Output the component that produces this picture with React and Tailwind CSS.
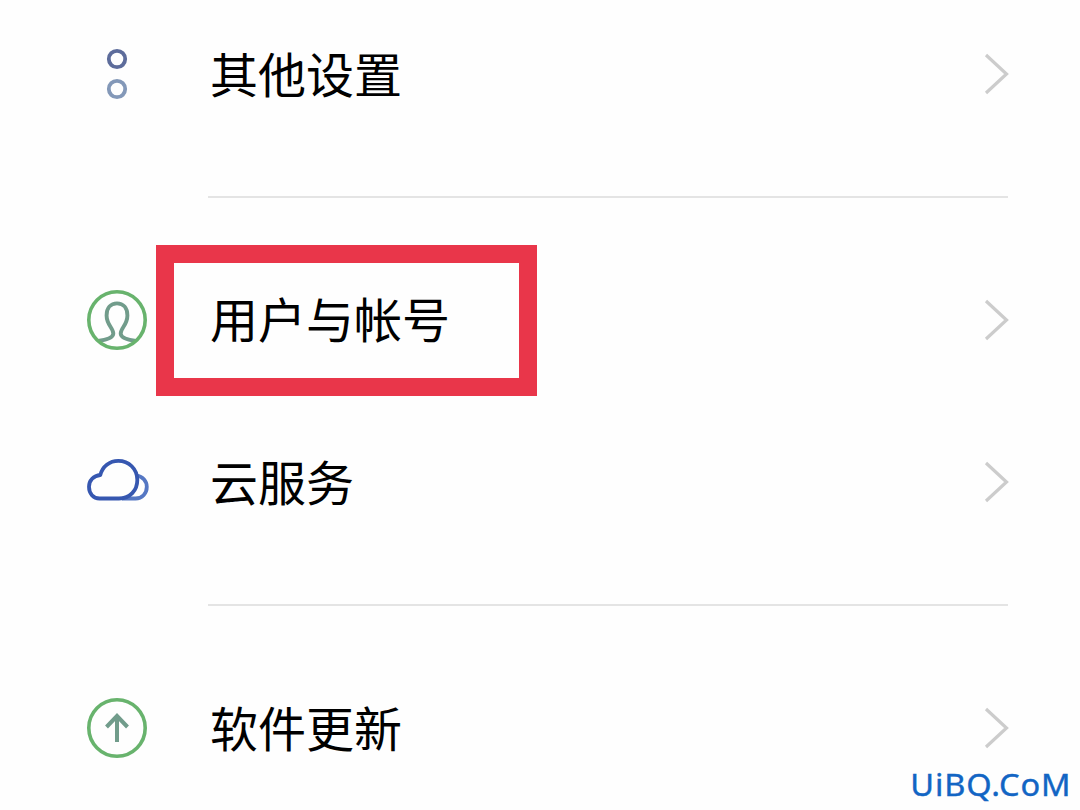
const Rings = () => (
  <svg width="64" height="64" viewBox="0 0 64 64" fill="none" strokeWidth="3.8">
    <circle cx="32" cy="17" r="8.2" stroke="#5d6c9b" />
    <circle cx="32" cy="47" r="8.2" stroke="#8398b8" />
  </svg>
);

const User = () => (
  <svg width="64" height="64" viewBox="0 0 64 64" fill="none">
    <path
      d="M13 53C21 52 28.3 50.3 28.3 45.5C28.3 40 21.6 37 21.6 27.5C21.6 20 25.8 15.4 32 15.4C38.2 15.4 42.4 20 42.4 27.5C42.4 37 35.7 40 35.7 45.5C35.7 50.3 43 52 51 53"
      stroke="#719c8b"
      strokeWidth="3.9"
    />
    <circle cx="32" cy="32" r="28.2" stroke="#68b36d" strokeWidth="3.6" />
  </svg>
);

const Cloud = () => (
  <svg width="64" height="64" viewBox="0 0 64 64" fill="none" strokeWidth="3.8">
    <path d="M51.5 25.6C58 26.5 61.8 31.2 61.8 36.8C61.8 43.6 57 48.5 50.5 48.5H37" stroke="#5577c3" />
    <path
      d="M14.5 48.5H34C45 48.5 52.3 40.5 52.3 30C52.3 18.8 43.8 10.9 33.3 10.9C24.5 10.9 17.5 16.5 15.3 25C8.5 25.7 4 30.5 4 36.8C4 43.5 8.3 48.5 14.5 48.5Z"
      stroke="#3657b0"
      strokeLinejoin="round"
    />
  </svg>
);

const Update = () => (
  <svg width="64" height="64" viewBox="0 0 64 64" fill="none">
    <circle cx="32" cy="32" r="28.2" stroke="#68b36d" strokeWidth="3.6" />
    <path d="M32 46V20M21.5 31L32 20L42.5 31" stroke="#719c8b" strokeWidth="4" />
  </svg>
);

const Chevron = () => (
  <svg className="mr-[70px]" width="26" height="44" viewBox="0 0 26 44" fill="none">
    <path d="M2 3L22.5 22L2 41" stroke="#cccccc" strokeWidth="3.2" />
  </svg>
);

function Item({ icon, label, highlighted }) {
  return (
    <div className="flex h-[162px] shrink-0 items-center">
      <div className="ml-[85px] w-16 shrink-0">{icon}</div>
      {highlighted ? (
        <div className="mt-px ml-[7px] flex h-[151px] w-[381px] items-center border-[18px] border-[#e9364a] pl-9">
          <span className="pb-[7px] text-[48px] leading-none whitespace-nowrap">{label}</span>
        </div>
      ) : (
        <span className="ml-[61px] pb-[5px] text-[48px] leading-none whitespace-nowrap">{label}</span>
      )}
      <div className="ml-auto">
        <Chevron />
      </div>
    </div>
  );
}

const Divider = () => (
  <div className="mr-[72px] ml-[208px] flex h-[84px] shrink-0 items-center">
    <div className="h-0.5 w-full bg-[#e4e4e4]" />
  </div>
);

export default function App() {
  return (
    <div className="relative h-[810px] w-[1080px] overflow-hidden bg-[#fefefe] font-['Noto_Sans_CJK_SC',sans-serif] text-black">
      <div className="-mt-[7px] flex flex-col">
        <Item icon={<Rings />} label="其他设置" />
        <Divider />
        <Item icon={<User />} label="用户与帐号" highlighted />
        <Item icon={<Cloud />} label="云服务" />
        <Divider />
        <Item icon={<Update />} label="软件更新" />
      </div>
      <span className="absolute right-[9px] bottom-2 origin-right scale-x-105 font-['Noto_Sans',sans-serif] text-[31px] leading-9 tracking-[0.8px] text-[#1265c4] [-webkit-text-stroke:0.4px_#1265c4]">
        UiBQ.CoM
      </span>
    </div>
  );
}
